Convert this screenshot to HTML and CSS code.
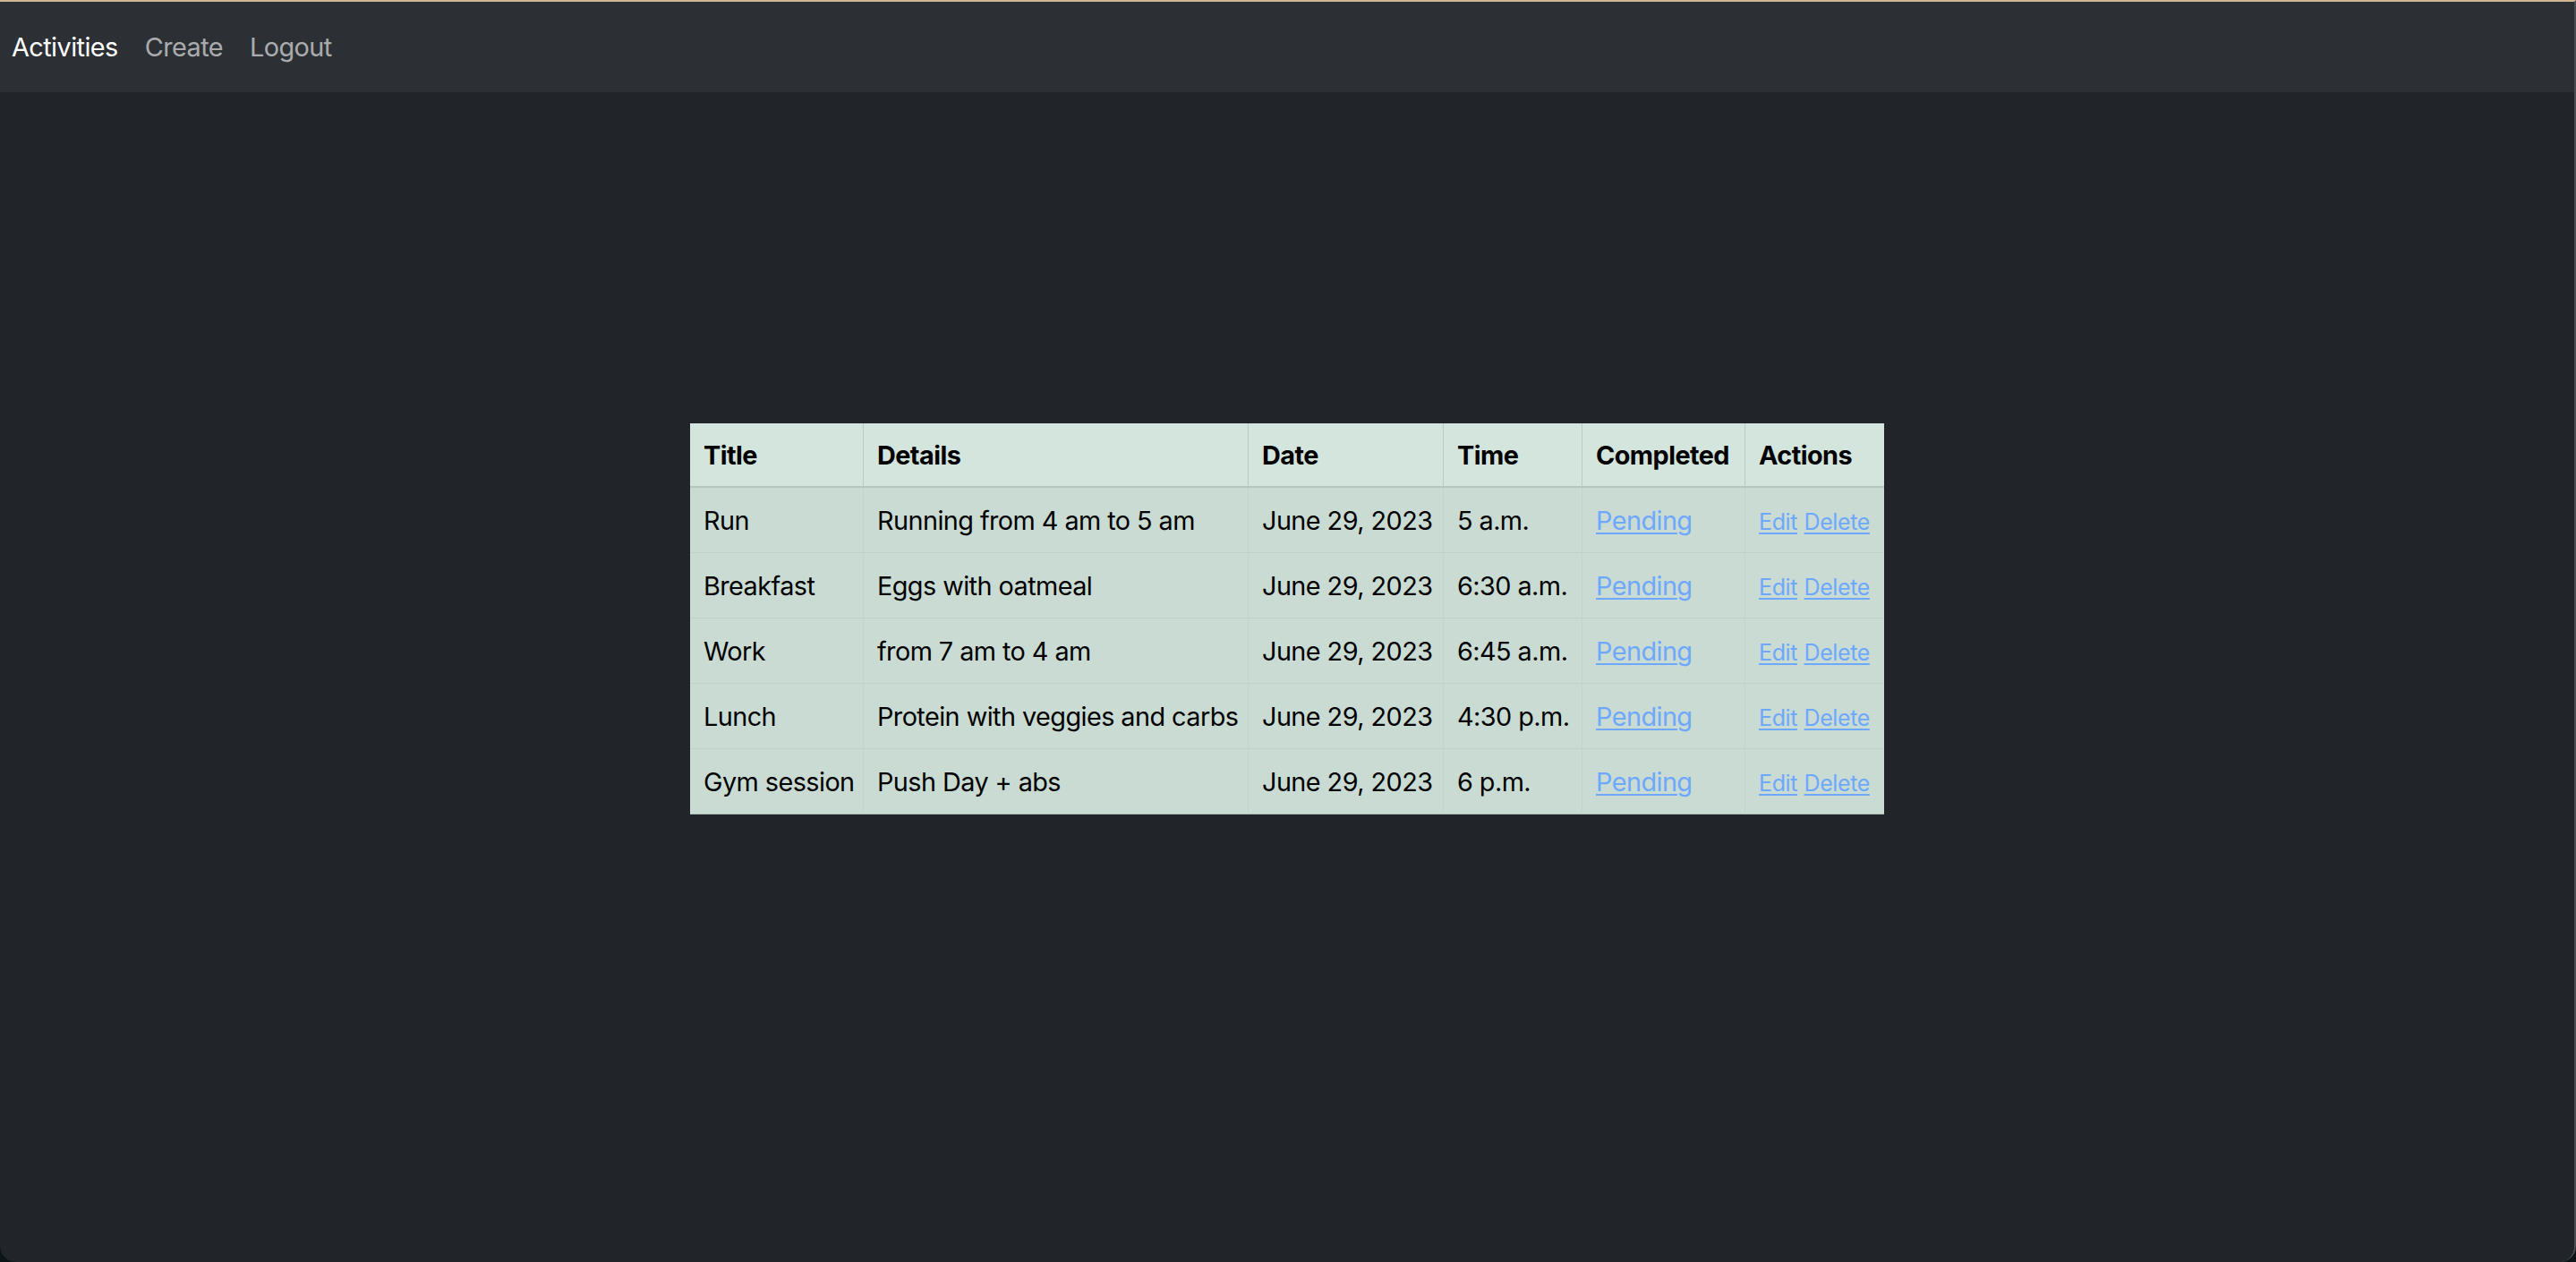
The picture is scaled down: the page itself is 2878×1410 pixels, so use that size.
FILE: index.html
```html
<!DOCTYPE html>
<html lang="en">
<head>
<meta charset="utf-8">
<title>Activities</title>
<link rel="stylesheet" href="styles.css">
</head>
<body>
<div class="window">
  <nav class="navbar">
    <a class="nav-link active" href="#">Activities</a>
    <a class="nav-link" href="#">Create</a>
    <a class="nav-link" href="#">Logout</a>
  </nav>
  <main class="content">
    <table class="activities">
      <colgroup>
        <col class="c-title">
        <col class="c-details">
        <col class="c-date">
        <col class="c-time">
        <col class="c-completed">
        <col class="c-actions">
      </colgroup>
      <thead>
        <tr>
          <th>Title</th>
          <th>Details</th>
          <th>Date</th>
          <th>Time</th>
          <th>Completed</th>
          <th>Actions</th>
        </tr>
      </thead>
      <tbody>
        <tr>
          <td>Run</td>
          <td>Running from 4 am to 5 am</td>
          <td>June 29, 2023</td>
          <td>5 a.m.</td>
          <td><a class="link" href="#">Pending</a></td>
          <td><a class="link small" href="#">Edit</a> <a class="link small" href="#">Delete</a></td>
        </tr>
        <tr>
          <td>Breakfast</td>
          <td>Eggs with oatmeal</td>
          <td>June 29, 2023</td>
          <td>6:30 a.m.</td>
          <td><a class="link" href="#">Pending</a></td>
          <td><a class="link small" href="#">Edit</a> <a class="link small" href="#">Delete</a></td>
        </tr>
        <tr>
          <td>Work</td>
          <td>from 7 am to 4 am</td>
          <td>June 29, 2023</td>
          <td>6:45 a.m.</td>
          <td><a class="link" href="#">Pending</a></td>
          <td><a class="link small" href="#">Edit</a> <a class="link small" href="#">Delete</a></td>
        </tr>
        <tr>
          <td>Lunch</td>
          <td>Protein with veggies and carbs</td>
          <td>June 29, 2023</td>
          <td>4:30 p.m.</td>
          <td><a class="link" href="#">Pending</a></td>
          <td><a class="link small" href="#">Edit</a> <a class="link small" href="#">Delete</a></td>
        </tr>
        <tr>
          <td>Gym session</td>
          <td>Push Day + abs</td>
          <td>June 29, 2023</td>
          <td>6 p.m.</td>
          <td><a class="link" href="#">Pending</a></td>
          <td><a class="link small" href="#">Edit</a> <a class="link small" href="#">Delete</a></td>
        </tr>
      </tbody>
    </table>
  </main>
</div>
</body>
</html>
```
FILE: styles.css
```css
* { box-sizing: border-box; }

html, body {
  margin: 0;
  padding: 0;
  height: 100%;
  background: #0d1418;
}

body {
  font-family: Inter, "Noto Sans", "Liberation Sans", sans-serif;
  font-size: 28.8px;
  letter-spacing: -0.55px;
  color: #dee2e6;
}

.window {
  height: 1410px;
  background: #212529;
  border-top: 2px solid #d2b692;
  border-right: 2px solid #4b4f54;
  border-radius: 0 0 18px 18px;
  overflow: hidden;
  display: flex;
  flex-direction: column;
}

.navbar {
  height: 101px;
  background: #2c3035;
  display: flex;
  align-items: center;
  gap: 30px;
  padding-left: 13px;
}

.nav-link {
  color: rgba(255, 255, 255, 0.62);
  text-decoration: none;
  line-height: 43px;
}

.nav-link.active {
  color: #ffffff;
}

.content {
  flex: 1;
  padding-top: 370px;
}

.activities {
  margin: 0 auto;
  width: 1334px;
  table-layout: fixed;
  border-collapse: separate;
  border-spacing: 0;
  color: #000;
}

.c-title { width: 194px; }
.c-details { width: 430px; }
.c-date { width: 218px; }
.c-time { width: 155px; }
.c-completed { width: 182px; }
.c-actions { width: 155px; }

.activities th,
.activities td {
  text-align: left;
  white-space: nowrap;
  line-height: 42px;
  height: 42px;
  padding-left: 15px;
  padding-right: 8px;
  overflow: visible;
}

.activities th {
  background: #d3e5dc;
  font-weight: 700;
  padding-top: 15px;
  padding-bottom: 13px;
  border-right: 1px solid #b9cbc3;
  border-bottom: 2px solid #b5c6be;
}

.activities td {
  background: #c9dbd2;
  font-weight: 400;
  padding-top: 16px;
  padding-bottom: 14px;
  border-right: 1px solid #c3d4cc;
  border-bottom: 1px solid #bfd0c8;
}

.activities th:last-child,
.activities td:last-child {
  border-right: none;
}

.activities tbody tr:last-child td {
  border-bottom: 1px solid #aebdb6;
}

.link {
  color: #6ea8fe;
  line-height: 1;
  text-decoration: underline;
  text-underline-offset: 3px;
  text-decoration-thickness: 1.5px;
}

.link.small {
  font-size: 25px;
  letter-spacing: -0.4px;
}
```
